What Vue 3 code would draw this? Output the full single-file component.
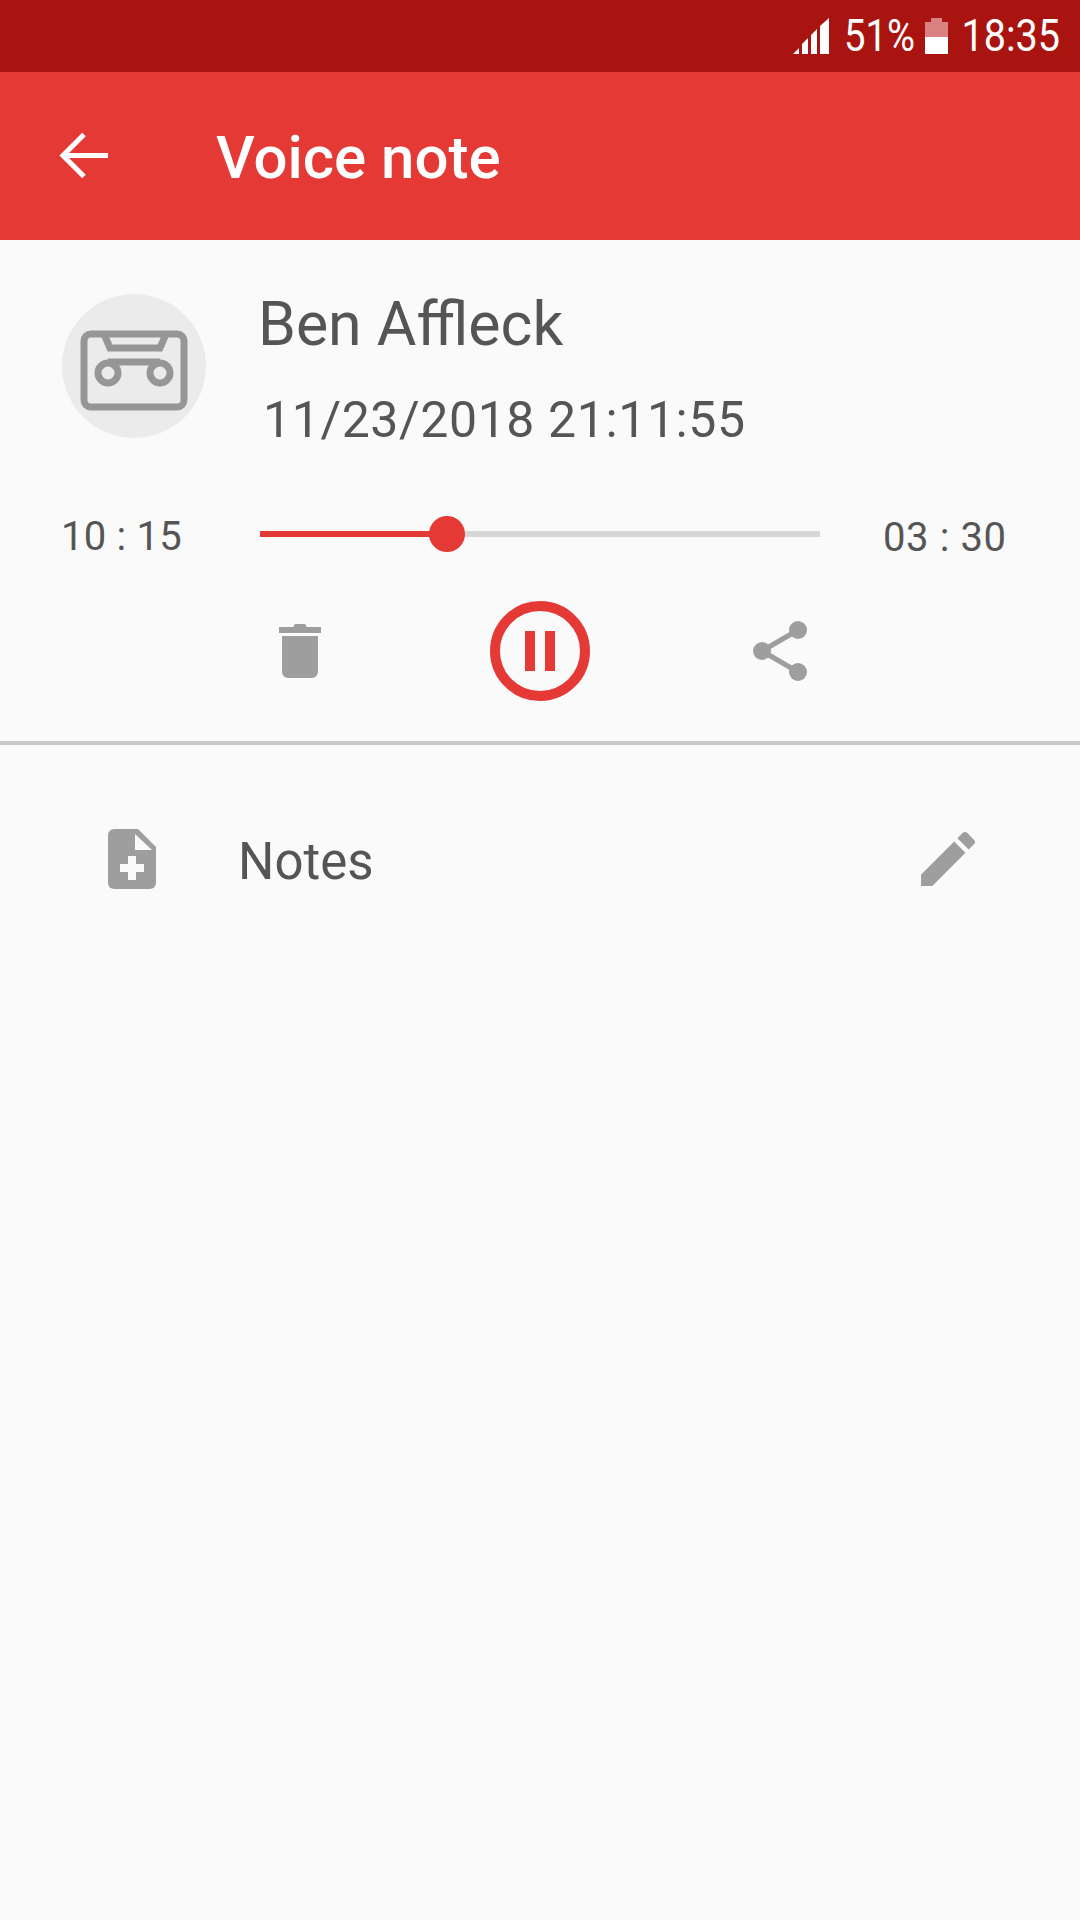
<script setup>
const progress = 33;
</script>

<template>
  <div class="screen">
    <div class="status-bar">
      <svg class="signal" width="36" height="36" viewBox="0 0 36 36">
        <path d="M0 36l6-6v6zM9 36V26l6-6v16zM18 36V17l6-6v25zM27 36V8l9-8v36z" fill="#fff" />
      </svg>
      <span class="status-text percent">51%</span>
      <svg class="battery" width="23" height="36" viewBox="0 0 23 36">
        <path d="M0 36V4h6V0h11v4h6v32z" fill="#d98080" />
        <path d="M0 36V19h23v17z" fill="#fff" />
      </svg>
      <span class="status-text clock">18:35</span>
    </div>

    <header class="app-bar">
      <svg class="back" width="50" height="50" viewBox="0 0 50 50">
        <path d="M49 24.500H4M25 3.500L4 24.500l21 21" fill="none" stroke="#fff" stroke-width="5" />
      </svg>
      <h1 class="title">Voice note</h1>
    </header>

    <section class="player">
      <div class="contact">
        <div class="avatar">
          <svg width="108" height="81" viewBox="0 0 108 81">
            <g fill="none" stroke="#969696" stroke-width="7">
              <rect x="4" y="4" width="100" height="73" rx="7" />
              <path d="M24 4l6 14h50l6-14" />
              <circle cx="28" cy="43" r="10" />
              <circle cx="80" cy="43" r="10" />
              <path d="M28 32h52" />
            </g>
          </svg>
        </div>
        <div class="contact-text">
          <div class="name">Ben Affleck</div>
          <div class="date">11/23/2018 21:11:55</div>
        </div>
      </div>

      <div class="progress-row">
        <span class="time elapsed">10 : 15</span>
        <div class="slider">
          <div class="slider-fill" :style="{ width: progress + '%' }"></div>
          <div class="slider-thumb"></div>
        </div>
        <span class="time total">03 : 30</span>
      </div>

      <div class="controls">
        <svg class="trash" width="42" height="54" viewBox="0 0 42 54">
          <path d="M0 3h14l2-3h10l2 3h14v6H0zM3 12h36v36a6 6 0 0 1-6 6H9a6 6 0 0 1-6-6z" fill="#9e9e9e" />
        </svg>
        <div class="pause">
          <span class="pause-bar"></span>
          <span class="pause-bar"></span>
        </div>
        <svg width="54" height="60" viewBox="0 0 54 60">
          <path d="M45 9L9 30l36 21" fill="none" stroke="#9e9e9e" stroke-width="5" />
          <circle cx="45" cy="9" r="9" fill="#9e9e9e" />
          <circle cx="9" cy="30" r="9" fill="#9e9e9e" />
          <circle cx="45" cy="51" r="9" fill="#9e9e9e" />
        </svg>
      </div>
    </section>

    <section class="notes">
      <svg width="48" height="60" viewBox="0 0 48 60">
        <path d="M6 0h24l18 18v36a6 6 0 0 1-6 6H6a6 6 0 0 1-6-6V6a6 6 0 0 1 6-6z" fill="#9e9e9e" />
        <path d="M27 5l17 16H27z" fill="#fafafa" />
        <path d="M20 27h8v8h8v8h-8v8h-8V43h-8v-8h8z" fill="#fafafa" />
      </svg>
      <span class="notes-label">Notes</span>
      <svg class="edit" width="72" height="72" viewBox="0 0 24 24">
        <path d="M3 17.250V21h3.750L17.810 9.940l-3.750-3.750L3 17.250zM20.710 7.040c.39-.39.39-1.020 0-1.410l-2.340-2.340c-.39-.39-1.020-.39-1.410 0l-1.830 1.830 3.750 3.750 1.830-1.830z" fill="#9e9e9e" />
      </svg>
    </section>
  </div>
</template>

<style scoped>
.screen {
  width: 1080px;
  height: 1920px;
  background: #fafafa;
  overflow: hidden;
  font-family: Roboto, "Liberation Sans", sans-serif;
  color: #555;
}
.status-bar {
  height: 72px;
  box-sizing: border-box;
  padding-right: 20px;
  background: #a91410;
  display: flex;
  align-items: center;
  justify-content: flex-end;
}
.status-text {
  color: #fff;
  font-size: 45px;
  line-height: 72px;
  transform-origin: right center;
  transform: scaleX(0.88);
}
.percent {
  width: 68px;
  white-space: nowrap;
  margin-left: 18px;
  display: flex;
  justify-content: flex-end;
  transform: scaleX(0.85);
}
.battery {
  margin-left: 10px;
}
.clock {
  width: 94px;
  white-space: nowrap;
  margin-left: 18px;
  display: flex;
  justify-content: flex-end;
}
.app-bar {
  height: 168px;
  background: #e53935;
  display: flex;
  align-items: center;
  padding-left: 59px;
}
.title {
  margin: 2px 0 0 107px;
  color: #fff;
  font-size: 60px;
  font-weight: 500;
}
.player {
  height: 505px;
  box-sizing: border-box;
  padding: 54px 0 0 62px;
  border-bottom: 4px solid #c8c8c8;
}
.contact {
  display: flex;
}
.avatar {
  width: 144px;
  height: 144px;
  box-sizing: border-box;
  padding-top: 9px;
  border-radius: 50%;
  background: #ebebeb;
  display: flex;
  align-items: center;
  justify-content: center;
}
.contact-text {
  margin-left: 52px;
  margin-top: -4px;
}
.name {
  font-size: 60.8px;
  line-height: 70px;
}
.date {
  margin: 31px 0 0 5px;
  font-size: 50px;
  line-height: 58px;
  letter-spacing: 0.6px;
}
.progress-row {
  display: flex;
  align-items: center;
  margin-top: 55px;
  height: 60px;
}
.time {
  font-size: 40px;
  line-height: 60px;
  white-space: nowrap;
}
.elapsed {
  width: 199px;
  margin: 6px 0 0 -1px;
  letter-spacing: 0.2px;
}
.total {
  margin: 8px 0 0 63px;
  letter-spacing: 0.6px;
}
.slider {
  position: relative;
  width: 560px;
  height: 6px;
  background: #d6d6d6;
}
.slider-fill {
  height: 6px;
  background: #e53935;
}
.slider-thumb {
  position: absolute;
  left: 169px;
  top: -15px;
  width: 36px;
  height: 36px;
  border-radius: 50%;
  background: #e53935;
}
.controls {
  display: flex;
  align-items: center;
  margin-top: 37px;
  padding-left: 217px;
}
.trash {
  margin-right: 169px;
}
.pause {
  width: 100px;
  height: 100px;
  box-sizing: border-box;
  margin-right: 163px;
  border: 10px solid #e53935;
  border-radius: 50%;
  display: flex;
  align-items: center;
  justify-content: center;
  gap: 10px;
}
.pause-bar {
  width: 10px;
  height: 40px;
  background: #e53935;
}
.notes {
  display: flex;
  align-items: center;
  padding: 78px 0 0 108px;
}
.notes-label {
  margin: 6px 0 0 82px;
  font-size: 51px;
  line-height: 60px;
}
.edit {
  margin-left: auto;
  margin-right: 96px;
}
</style>
